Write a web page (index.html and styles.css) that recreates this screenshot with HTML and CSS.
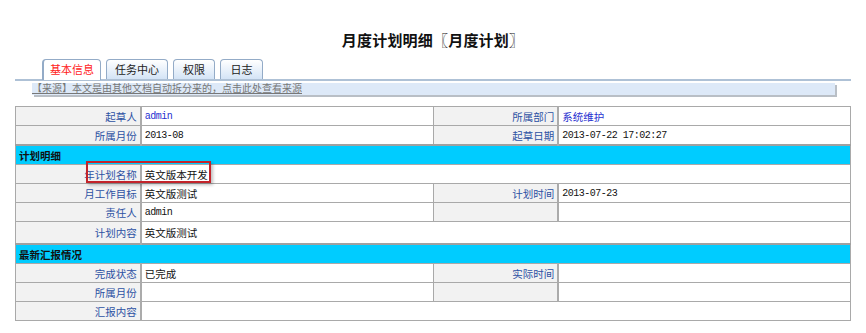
FILE: index.html
```html
<!DOCTYPE html>
<html lang="zh-CN">
<head>
    <meta charset="UTF-8">
    <title>月度计划明细</title>
    <link rel="stylesheet" href="styles.css">
</head>
<body>

<div class="page">
    <h1 class="title">月度计划明细〖月度计划〗</h1>

    <!-- 标签页 -->
    <div class="tabs">
        <div class="tab active tab-w4">基本信息</div>
        <div class="tab tab-w4b">任务中心</div>
        <div class="tab tab-w2">权限</div>
        <div class="tab tab-w2b">日志</div>
    </div>

    <div class="source-bar">
        <a href="#">【来源】本文是由其他文档自动拆分来的，点击此处查看来源</a>
    </div>

    <div class="detail-wrap">
        <table class="detail">
            <colgroup>
                <col class="c-label">
                <col class="c-value">
                <col class="c-label">
                <col class="c-value">
            </colgroup>
            <tr>
                <td class="label">起草人</td>
                <td class="mono link">admin</td>
                <td class="label">所属部门</td>
                <td class="link">系统维护</td>
            </tr>
            <tr>
                <td class="label">所属月份</td>
                <td class="mono">2013-08</td>
                <td class="label">起草日期</td>
                <td class="mono">2013-07-22 17:02:27</td>
            </tr>
            <tr class="section">
                <td colspan="4">计划明细</td>
            </tr>
            <tr>
                <td class="label">年计划名称</td>
                <td colspan="3">英文版本开发</td>
            </tr>
            <tr>
                <td class="label">月工作目标</td>
                <td>英文版测试</td>
                <td class="label">计划时间</td>
                <td class="mono">2013-07-23</td>
            </tr>
            <tr>
                <td class="label">责任人</td>
                <td class="mono">admin</td>
                <td class="label"></td>
                <td></td>
            </tr>
            <tr class="tall">
                <td class="label">计划内容</td>
                <td colspan="3">英文版测试</td>
            </tr>
            <tr class="section">
                <td colspan="4">最新汇报情况</td>
            </tr>
            <tr>
                <td class="label">完成状态</td>
                <td>已完成</td>
                <td class="label">实际时间</td>
                <td></td>
            </tr>
            <tr>
                <td class="label">所属月份</td>
                <td></td>
                <td class="label"></td>
                <td></td>
            </tr>
            <tr>
                <td class="label">汇报内容</td>
                <td colspan="3"></td>
            </tr>
        </table>

        <!-- 红色标注框 -->
        <div class="mark"></div>
    </div>
</div>

</body>
</html>
```

FILE: styles.css
```css
body {
    margin: 0;
    padding: 0;
    background-color: #fff;
    font-family: "Liberation Sans", "Noto Sans CJK SC", sans-serif;
    color: #111;
}

.page {
    padding: 0 15px;
}

.title {
    margin: 0;
    padding-top: 31px;
    height: 20px;
    line-height: 20px;
    font-size: 15px;
    font-weight: bold;
    text-align: center;
    letter-spacing: 0.2px;
}

.tabs {
    display: flex;
    gap: 5px;
    margin-top: 8px;
    padding-left: 27px;
    border-bottom: 2px solid #aec1d6;
}

.tab {
    height: 19px;
    line-height: 20px;
    font-size: 11px;
    text-align: center;
    border: 1px solid #93abc7;
    border-bottom: none;
    border-radius: 4px 4px 0 0;
    background: linear-gradient(#ffffff, #d4e4f6);
    color: #222;
}

.tab.active {
    background: #fff;
    color: #ff1a1a;
    height: 20px;
    margin-bottom: -2px;
    border-left-width: 2px;
}

.tab-w4 { width: 56px; }
.tab-w4b { width: 60px; }
.tab-w2 { width: 40px; }
.tab-w2b { width: 41px; }

.source-bar {
    margin: 2px 16px 0 17px;
    height: 12px;
    line-height: 12px;
    background-color: #dde9f8;
    box-shadow: 2px 2px 0 #b9bfc6;
    font-size: 10px;
}

.source-bar a {
    color: #777;
    text-decoration: underline;
}

.detail-wrap {
    position: relative;
    margin-top: 11px;
}

.detail {
    width: 100%;
    border-collapse: collapse;
    table-layout: fixed;
    font-size: 10.5px;
}

.c-label { width: 15%; }
.c-value { width: 35%; }

.detail td {
    height: 18px;
    padding: 0 3px;
    border: 1px solid #a9a9a9;
    white-space: nowrap;
    overflow: hidden;
}

.detail tr.tall td {
    height: 21px;
}

.detail td.label {
    background-color: #f2f2f2;
    color: #2d51a3;
    text-align: right;
    border-right: 2px solid #ababab;
}

.detail td.mono {
    font-family: "Liberation Mono", monospace;
    font-size: 10px;
    letter-spacing: -0.5px;
}

.detail td.link {
    color: #1f2fd0;
}

.detail tr.section td {
    background-color: #00ccff;
    font-weight: bold;
    height: 18px;
    border-top: 2px solid #a0a0a0;
}

.mark {
    position: absolute;
    left: 71px;
    top: 55px;
    width: 121px;
    height: 18px;
    border: 2px solid #c3242b;
    box-shadow: 2px 2px 3px rgba(0, 0, 0, 0.25);
}
```
